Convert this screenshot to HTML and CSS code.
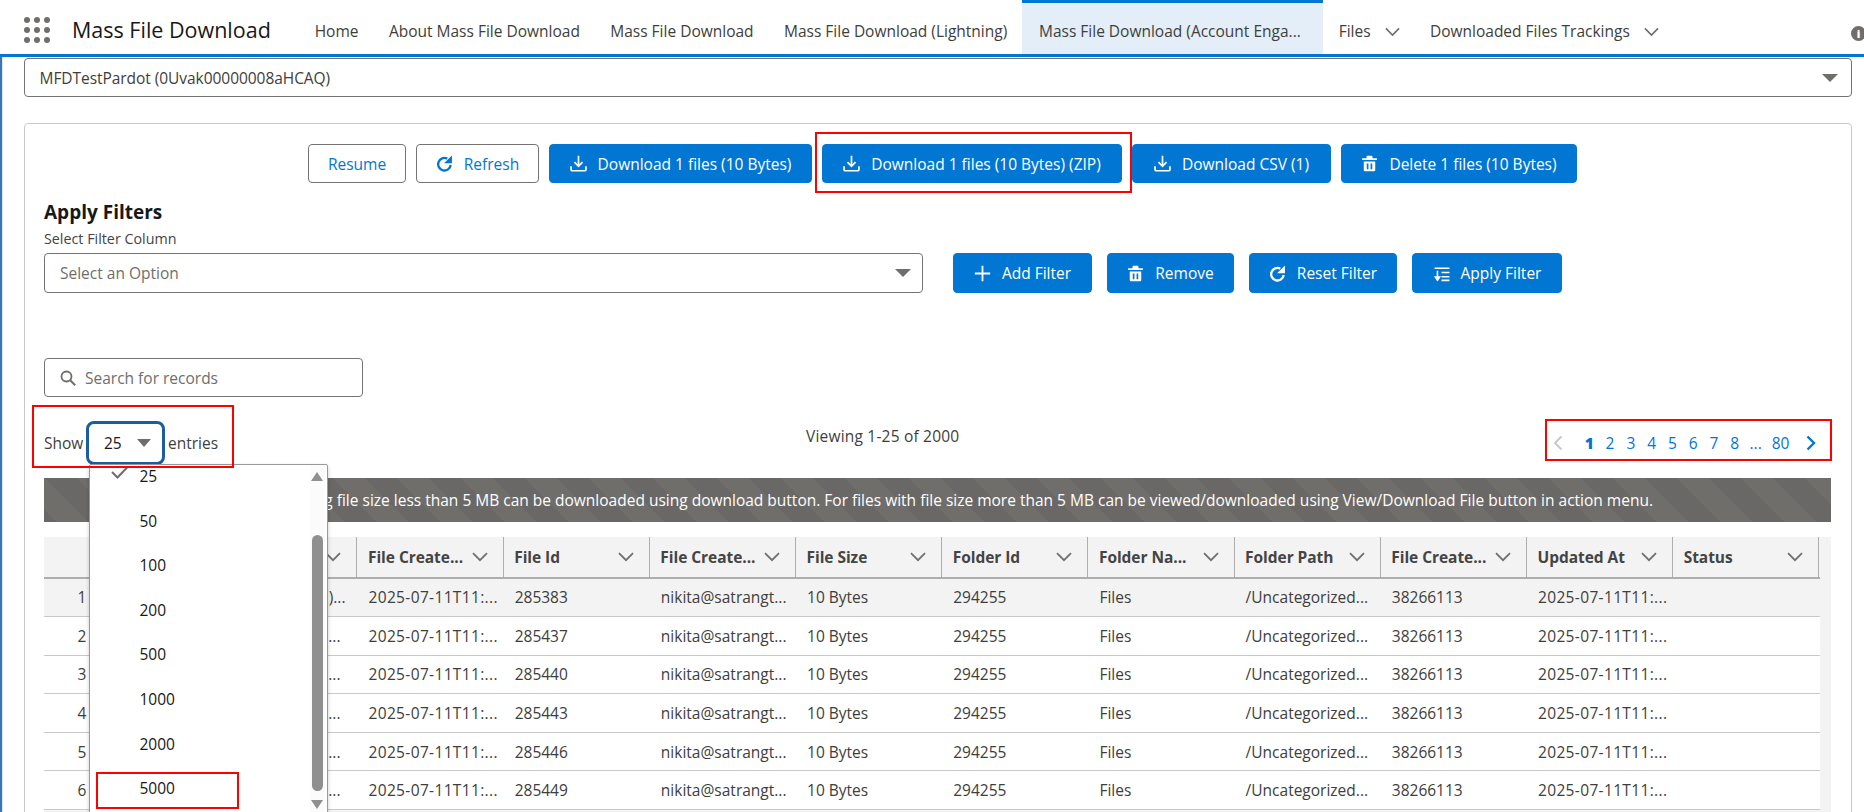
FILE: index.html
```html
<!DOCTYPE html>
<html lang="en">
<head>
<meta charset="utf-8">
<title>Mass File Download</title>
<link rel="stylesheet" href="styles.css">
</head>
<body>
<svg class="defs" width="0" height="0" aria-hidden="true">
  <symbol id="i-download" viewBox="0 0 16 16"><path d="M8 .8v9.4M4.2 6.8 8 10.6l3.8-3.8M1 10.6v3.2a1 1 0 0 0 1 1h12a1 1 0 0 0 1-1v-3.2" fill="none" stroke="currentColor" stroke-width="1.6"/></symbol>
  <symbol id="i-refresh" viewBox="0 0 16 16"><path d="M13.8 9.4A5.9 5.9 0 1 1 10.6 3.4" fill="none" stroke="currentColor" stroke-width="2.200"/><path d="M15 .4v7.400H7.600z" fill="currentColor"/></symbol>
  <symbol id="i-trash" viewBox="0 0 16 16"><path fill="currentColor" fill-rule="evenodd" d="M6 .8h4a.8.8 0 0 1 .8.8V3H15v1.6H1V3h4.200V1.600A.8.8 0 0 1 6 .8zM2.600 6h10.800v8.400a1 1 0 0 1-1 1H3.600a1 1 0 0 1-1-1zM5.400 8v5.400h1.600V8zm3.600 0v5.400h1.600V8z"/></symbol>
  <symbol id="i-plus" viewBox="0 0 16 16"><path d="M8 .8v14.400M.8 8h14.400" fill="none" stroke="currentColor" stroke-width="1.700"/></symbol>
  <symbol id="i-sort" viewBox="0 0 16 16"><path d="M1.500 3h14M8 7h7.500M8 11h7.500M8 14.500h7.500M4.200 5.500v9" fill="none" stroke="currentColor" stroke-width="1.500"/><path d="M.8 10.500h6.800L4.200 15.500z" fill="currentColor"/></symbol>
  <symbol id="i-chev" viewBox="0 0 16 10"><path d="M1 1.200 8 8.200l7-7" fill="none" stroke="currentColor" stroke-width="1.700"/></symbol>
</svg>

<div class="page">
  <header class="nav">
    <svg class="waffle" viewBox="0 0 26 26" aria-hidden="true"><g fill="#706e6b"><circle cx="3" cy="3" r="3"/><circle cx="13" cy="3" r="3"/><circle cx="23" cy="3" r="3"/><circle cx="3" cy="13" r="3"/><circle cx="13" cy="13" r="3"/><circle cx="23" cy="13" r="3"/><circle cx="3" cy="23" r="3"/><circle cx="13" cy="23" r="3"/><circle cx="23" cy="23" r="3"/></g></svg>
    <span class="app-name">Mass File Download</span>
    <nav class="tabs">
      <a class="tab">Home</a>
      <a class="tab">About Mass File Download</a>
      <a class="tab">Mass File Download</a>
      <a class="tab">Mass File Download (Lightning)</a>
      <a class="tab tab-active">Mass File Download (Account Enga...</a>
      <a class="tab tab-menu">Files <svg class="tab-chev"><use href="#i-chev"/></svg></a>
      <a class="tab tab-menu">Downloaded Files Trackings <svg class="tab-chev"><use href="#i-chev"/></svg></a>
    </nav>
    <span class="info-dot">i</span>
  </header>

  <main class="main">
    <div class="select top-select">
      <span>MFDTestPardot (0Uvak00000008aHCAQ)</span>
      <i class="tri"></i>
    </div>

    <section class="card">
      <div class="actions">
        <button class="btn btn-outline w-resume">Resume</button>
        <button class="btn btn-outline w-refresh"><svg class="ico"><use href="#i-refresh"/></svg>Refresh</button>
        <button class="btn w-dl"><svg class="ico"><use href="#i-download"/></svg>Download 1 files (10 Bytes)</button>
        <button class="btn w-zip"><svg class="ico"><use href="#i-download"/></svg>Download 1 files (10 Bytes) (ZIP)</button>
        <button class="btn w-csv"><svg class="ico"><use href="#i-download"/></svg>Download CSV (1)</button>
        <button class="btn w-del"><svg class="ico"><use href="#i-trash"/></svg>Delete 1 files (10 Bytes)</button>
      </div>

      <h2 class="filters-title">Apply Filters</h2>
      <div class="filters-label">Select Filter Column</div>
      <div class="filters-row">
        <div class="select filter-select">
          <span class="placeholder">Select an Option</span>
          <i class="tri"></i>
        </div>
        <div class="filter-btns">
          <button class="btn w-add"><svg class="ico"><use href="#i-plus"/></svg>Add Filter</button>
          <button class="btn w-rem"><svg class="ico"><use href="#i-trash"/></svg>Remove</button>
          <button class="btn w-res"><svg class="ico"><use href="#i-refresh"/></svg>Reset Filter</button>
          <button class="btn w-app"><svg class="ico"><use href="#i-sort"/></svg>Apply Filter</button>
        </div>
      </div>

      <div class="search">
        <svg class="search-ico" viewBox="0 0 16 16" aria-hidden="true"><circle cx="6.500" cy="6.500" r="5" fill="none" stroke="currentColor" stroke-width="1.800"/><path d="m10.200 10.200 5 5" stroke="currentColor" stroke-width="2"/></svg>
        <span class="placeholder">Search for records</span>
      </div>

      <div class="toolbar">
        <div class="show">
          <span class="show-word">Show</span>
          <div class="size-select">
            <span>25</span><i class="tri tri-small"></i>
            <div class="menu">
              <div class="menu-item"><svg class="check" viewBox="0 0 18 14" aria-hidden="true"><path d="M1 7l5.500 5.500L17 1.500" fill="none" stroke="currentColor" stroke-width="2"/></svg>25</div>
              <div class="menu-item">50</div>
              <div class="menu-item">100</div>
              <div class="menu-item">200</div>
              <div class="menu-item">500</div>
              <div class="menu-item">1000</div>
              <div class="menu-item">2000</div>
              <div class="menu-item">5000</div>
              <div class="menu-bar">
                <i class="bar-up"></i>
                <i class="bar-thumb"></i>
                <i class="bar-down"></i>
              </div>
            </div>
          </div>
          <span>entries</span>
        </div>
        <div class="viewing">Viewing 1-25 of 2000</div>
        <div class="pager">
          <svg class="pg-arrow pg-off" viewBox="0 0 10 16" aria-hidden="true"><path d="M8.500 1.500 2 8l6.500 6.500" fill="none" stroke="currentColor" stroke-width="2"/></svg>
          <a class="pg pg-cur">1</a><a class="pg">2</a><a class="pg">3</a><a class="pg">4</a><a class="pg">5</a><a class="pg">6</a><a class="pg">7</a><a class="pg">8</a><a class="pg pg-dots">...</a><a class="pg pg-wide">80</a>
          <svg class="pg-arrow" viewBox="0 0 10 16" aria-hidden="true"><path d="M1.500 1.500 8 8l-6.500 6.500" fill="none" stroke="currentColor" stroke-width="2.400"/></svg>
        </div>
      </div>

      <div class="banner"><span>Note: Files having file size less than 5 MB can be downloaded using download button. For files with file size more than 5 MB can be viewed/downloaded using View/Download File button in action menu.</span></div>

      <div class="table">
        <div class="row head">
          <div class="th th-num"></div>
          <div class="th"><span>File Name</span><svg class="th-chev"><use href="#i-chev"/></svg></div>
          <div class="th"><span>File Create...</span><svg class="th-chev"><use href="#i-chev"/></svg></div>
          <div class="th"><span>File Id</span><svg class="th-chev"><use href="#i-chev"/></svg></div>
          <div class="th"><span>File Create...</span><svg class="th-chev"><use href="#i-chev"/></svg></div>
          <div class="th"><span>File Size</span><svg class="th-chev"><use href="#i-chev"/></svg></div>
          <div class="th"><span>Folder Id</span><svg class="th-chev"><use href="#i-chev"/></svg></div>
          <div class="th"><span>Folder Na...</span><svg class="th-chev"><use href="#i-chev"/></svg></div>
          <div class="th"><span>Folder Path</span><svg class="th-chev"><use href="#i-chev"/></svg></div>
          <div class="th"><span>File Create...</span><svg class="th-chev"><use href="#i-chev"/></svg></div>
          <div class="th"><span>Updated At</span><svg class="th-chev"><use href="#i-chev"/></svg></div>
          <div class="th"><span>Status</span><svg class="th-chev"><use href="#i-chev"/></svg></div>
        </div>
        <div class="row hover"><div class="td td-num">1</div><div class="td td-end td-first">File Name (1)...</div><div class="td td-date">2025-07-11T11:...</div><div class="td">285383</div><div class="td">nikita@satrangt...</div><div class="td">10 Bytes</div><div class="td">294255</div><div class="td">Files</div><div class="td">/Uncategorized...</div><div class="td">38266113</div><div class="td td-date">2025-07-11T11:...</div><div class="td"></div></div>
        <div class="row"><div class="td td-num">2</div><div class="td td-end">File Name...</div><div class="td td-date">2025-07-11T11:...</div><div class="td">285437</div><div class="td">nikita@satrangt...</div><div class="td">10 Bytes</div><div class="td">294255</div><div class="td">Files</div><div class="td">/Uncategorized...</div><div class="td">38266113</div><div class="td td-date">2025-07-11T11:...</div><div class="td"></div></div>
        <div class="row"><div class="td td-num">3</div><div class="td td-end">File Name...</div><div class="td td-date">2025-07-11T11:...</div><div class="td">285440</div><div class="td">nikita@satrangt...</div><div class="td">10 Bytes</div><div class="td">294255</div><div class="td">Files</div><div class="td">/Uncategorized...</div><div class="td">38266113</div><div class="td td-date">2025-07-11T11:...</div><div class="td"></div></div>
        <div class="row"><div class="td td-num">4</div><div class="td td-end">File Name...</div><div class="td td-date">2025-07-11T11:...</div><div class="td">285443</div><div class="td">nikita@satrangt...</div><div class="td">10 Bytes</div><div class="td">294255</div><div class="td">Files</div><div class="td">/Uncategorized...</div><div class="td">38266113</div><div class="td td-date">2025-07-11T11:...</div><div class="td"></div></div>
        <div class="row"><div class="td td-num">5</div><div class="td td-end">File Name...</div><div class="td td-date">2025-07-11T11:...</div><div class="td">285446</div><div class="td">nikita@satrangt...</div><div class="td">10 Bytes</div><div class="td">294255</div><div class="td">Files</div><div class="td">/Uncategorized...</div><div class="td">38266113</div><div class="td td-date">2025-07-11T11:...</div><div class="td"></div></div>
        <div class="row"><div class="td td-num">6</div><div class="td td-end">File Name...</div><div class="td td-date">2025-07-11T11:...</div><div class="td">285449</div><div class="td">nikita@satrangt...</div><div class="td">10 Bytes</div><div class="td">294255</div><div class="td">Files</div><div class="td">/Uncategorized...</div><div class="td">38266113</div><div class="td td-date">2025-07-11T11:...</div><div class="td"></div></div>
      </div>
    </section>
  </main>

  <div class="mark mark-zip"></div>
  <div class="mark mark-show"></div>
  <div class="mark mark-pager"></div>
  <div class="mark mark-5000"></div>
</div>
</body>
</html>
```

FILE: styles.css
```css
* { box-sizing: border-box; }
html, body { margin: 0; height: 812px; overflow: hidden; background: #fff; }
body { font-family: "Open Sans", "Noto Sans", sans-serif; font-size: 15.5px; color: #3e3e3c; }
.defs { position: absolute; }
.page { position: relative; height: 812px; overflow: hidden; }

/* top nav */
.nav { display: flex; align-items: stretch; height: 57px; border-bottom: 3px solid #0176d3; padding-left: 24px; position: relative; }
.waffle { width: 26px; height: 26px; margin-top: 17px; flex: none; }
.app-name { font-size: 21.5px; color: #181818; margin-left: 22px; width: 227.5px; line-height: 60px; flex: none; white-space: nowrap; }
.tabs { display: flex; align-items: stretch; }
.tab { display: flex; align-items: center; padding: 7px 15.2px 0; color: #3e3e3c; white-space: nowrap; height: 54px; }
.tab-active { width: 301px; background: #e4eef8; border-top: 3px solid #0176d3; padding: 4px 0 0 16.5px; }
.tab-menu { gap: 14px; }
.tab-chev { width: 15px; height: 10px; color: #706e6b; margin-top: 3px; }
.info-dot { position: absolute; left: 1851px; top: 26px; width: 15px; height: 15px; border-radius: 50%; background: #706e6b; color: #fff; font-size: 11px; font-weight: 800; line-height: 15px; text-align: center; }

/* layout */
.main { border-left: 2px solid #3d74b5; box-shadow: inset 1px 0 0 #dfe8f2; padding: 1px 12px 0 22px; height: 755px; }
.select { display: flex; align-items: center; justify-content: space-between; border: 1px solid #747474; border-radius: 4px; background: #fff; }
.top-select { height: 39px; padding: 0 13px 0 14.5px; color: #3e3e3c; letter-spacing: -.05px; }
.tri { display: block; width: 0; height: 0; border-left: 8px solid transparent; border-right: 8px solid transparent; border-top: 8px solid #706e6b; }
.card { margin-top: 26px; height: 720px; border: 1px solid #c9c9c9; border-radius: 4px; padding: 20px 20px 0 19px; }

/* buttons */
.actions { display: flex; gap: 10px; padding-left: 264px; }
.btn { display: inline-flex; align-items: center; justify-content: center; gap: 11px; height: 39px; padding: 0; border: 1px solid #0176d3; border-radius: 4px; background: #0176d3; color: #fff; font: inherit; white-space: nowrap; }
.btn-outline { background: #fff; border-color: #747474; color: #0176d3; }
.ico { width: 17px; height: 17px; flex: none; }
.w-resume { width: 98px; }
.w-refresh { width: 123px; }
.w-dl { width: 263px; }
.w-zip { width: 300px; }
.w-csv { width: 199px; }
.w-del { width: 236px; }
.w-add { width: 139px; }
.w-rem { width: 127px; }
.w-res { width: 148px; }
.w-app { width: 150px; }

/* filters */
.filters-title { margin: 17px 0 0; font-size: 19px; line-height: 25px; font-weight: 700; color: #181818; }
.filters-label { font-size: 14.3px; line-height: 18px; margin-top: 5px; color: #444; }
.filters-row { display: flex; margin-top: 5px; }
.filter-select { width: 879px; height: 40px; padding: 0 11px 0 15px; }
.placeholder { color: #706e6b; }
.filter-btns { display: flex; gap: 15px; margin-left: 30px; }
.filter-btns .btn { height: 40px; }
.search { display: flex; align-items: center; gap: 9px; width: 319px; height: 39px; margin-top: 65px; padding-left: 15px; border: 1px solid #747474; border-radius: 4px; }
.search-ico { width: 16px; height: 16px; color: #706e6b; }

/* toolbar */
.toolbar { display: flex; height: 44px; margin-top: 24px; position: relative; }
.show { display: flex; align-items: center; gap: 3px; height: 44px; color: #3e3e3c; }
.show-word { width: 39px; }
.size-select { position: relative; display: flex; align-items: center; justify-content: space-between; width: 79px; height: 44px; padding: 0 11px 0 15px; border: 3px solid #1b5e9f; border-radius: 8px; color: #181818; }
.tri-small { border-left-width: 7px; border-right-width: 7px; border-top-width: 8px; }
.menu { position: absolute; left: -.5px; top: 40px; width: 239px; height: 400px; background: #fff; border: 1px solid #999; border-radius: 2px; box-shadow: 0 2px 4px rgba(0,0,0,.2); z-index: 3; color: #181818; }
.menu-item { position: relative; height: 44.6px; line-height: 22px; padding-left: 50px; }
.check { position: absolute; left: 21px; top: 0; width: 18px; height: 14px; color: #706e6b; }
.menu-bar { position: absolute; top: 0; right: 2px; width: 15px; height: 348px; background: #fbfbfb; }
.menu-bar i { position: absolute; display: block; }
.bar-up { left: 1px; top: 7px; width: 0; height: 0; border-left: 6.5px solid transparent; border-right: 6.5px solid transparent; border-bottom: 9px solid #8f8f8f; }
.bar-thumb { left: 2px; top: 70px; width: 11px; height: 256px; border-radius: 6px; background: #8f8f8f; }
.bar-down { left: 1px; top: 335px; width: 0; height: 0; border-left: 6.5px solid transparent; border-right: 6.5px solid transparent; border-top: 9px solid #8f8f8f; }
.viewing { position: absolute; left: 762px; top: 5px; line-height: 20px; color: #3e3e3c; letter-spacing: .2px; }
.pager { position: absolute; right: 15px; top: 12px; display: flex; align-items: center; height: 20px; color: #0176d3; }
.pg { width: 20.8px; text-align: center; }
.pg-cur { font-weight: 800; }
.pg-wide { width: 29px; }
.pg-arrow { width: 10px; height: 16px; }
.pg-off { color: #c9c9c9; margin-right: 16px; }
.pager .pg-arrow:last-child { margin-left: 11px; }

/* banner */
.banner { display: flex; align-items: center; justify-content: flex-end; height: 44px; margin-top: 13px; width: 1787px; padding-right: 178px; color: #fff; white-space: nowrap; background-color: #706e6b; background-image: linear-gradient(45deg, rgba(0,0,0,.05) 25%, transparent 25%, transparent 50%, rgba(0,0,0,.05) 50%, rgba(0,0,0,.05) 75%, transparent 75%, transparent); background-size: 64px 64px; }

/* table */
.table { width: 1787px; margin-top: 15px; background: #f3f3f3; padding-right: 11.500px; height: 280px; overflow: hidden; }
.row { display: grid; grid-template-columns: 167.300px repeat(11, 146.200px); height: 38.600px; background: #fff; border-bottom: 1px solid #c9c9c9; }
.row.hover { background: #f3f3f3; }
.row.head { height: 41.500px; background: #f3f3f3; border-bottom: 2px solid #aeaeae; }
.th { display: flex; align-items: center; justify-content: space-between; padding: 0 15px 0 10.500px; border-right: 1px solid #aeaeae; font-weight: 700; color: #444; white-space: nowrap; min-width: 0; }
.th span { overflow: hidden; letter-spacing: -.05px; }
.th-num { border-right: 0; }
.th-chev { width: 16px; height: 10px; flex: none; color: #706e6b; }
.td { display: flex; align-items: center; padding-left: 11px; white-space: nowrap; overflow: hidden; color: #3e3e3c; min-width: 0; }
.td-date { letter-spacing: .35px; }
.td-num { justify-content: flex-end; padding-right: 125px; padding-left: 0; }
.td-end { justify-content: flex-end; padding: 0 17px 0 0; }
.td-first { padding-right: 12px; }

/* red annotation boxes */
.mark { position: absolute; border: 2.5px solid #f00; pointer-events: none; z-index: 5; }
.mark-zip { left: 815px; top: 132px; width: 317px; height: 61px; }
.mark-show { left: 32px; top: 405px; width: 202px; height: 63px; }
.mark-pager { left: 1545px; top: 419px; width: 287px; height: 42px; }
.mark-5000 { left: 96px; top: 772px; width: 143px; height: 37px; }
```
